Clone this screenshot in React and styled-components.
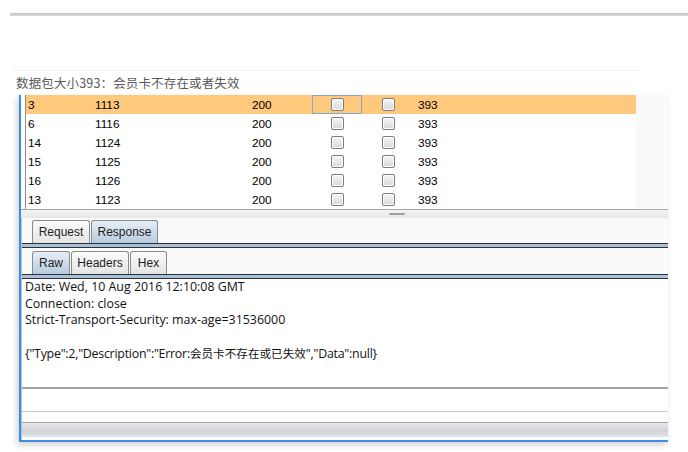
import React from 'react';
import styled, { createGlobalStyle } from 'styled-components';

const GlobalStyle = createGlobalStyle`
  html, body {
    margin: 0;
    padding: 0;
    background: #ffffff;
  }
  body {
    width: 688px;
    height: 452px;
    overflow: hidden;
    font-family: "Liberation Sans", Arial, sans-serif;
  }
`;

const Page = styled.div`
  display: flex;
  flex-direction: column;
  padding-top: 13px;
  height: 452px;
  box-sizing: border-box;
`;

const TopRule = styled.div`
  margin-left: 10px;
  height: 3px;
  background: linear-gradient(#c4c4c4, #dcdcdc);
`;

const BlankBox = styled.div`
  margin-left: 12px;
  width: 628px;
  height: 55px;
  border-bottom: 1px solid #f3f3f3;
  box-sizing: border-box;
`;

const Caption = styled.div`
  height: 24px;
  display: flex;
  align-items: center;
  padding-left: 16px;
  padding-bottom: 1px;
  box-sizing: border-box;
  font-family: "Noto Sans CJK SC", "Noto Sans", sans-serif;
  font-size: 12.5px;
  letter-spacing: 0.15px;
  color: #5a5a5a;
`;

const Window = styled.div`
  margin-left: 19px;
  width: 649px;
  height: 347px;
  box-sizing: border-box;
  border-left: 2px solid #3a8ee2;
  border-bottom: 2px solid #3a8ee2;
  box-shadow: -2px 3px 6px rgba(0, 0, 0, 0.18);
  display: flex;
  flex-direction: column;
  background: #ffffff;
`;

const TableArea = styled.div`
  display: flex;
  height: 114px;
  padding-left: 4px;
`;

const Table = styled.div`
  width: 611px;
  border-left: 1px solid #8e8e8e;
  display: flex;
  flex-direction: column;
`;

const SideStrip = styled.div`
  width: 32px;
  background: #fafafa;
`;

const Row = styled.div`
  display: grid;
  grid-template-columns: 67px 157px 62px 50px 52px 1fr;
  height: 19px;
  align-items: center;
  background: ${p => (p.$selected ? '#fec97c' : '#ffffff')};
`;

const Cell = styled.div`
  height: 100%;
  display: flex;
  align-items: center;
  padding-left: ${p => p.$pad ?? 1}px;
  font-size: 11.8px;
  color: #000;
  box-sizing: border-box;
  justify-content: ${p => (p.$center ? 'center' : 'flex-start')};
  border: 1px solid ${p => (p.$focus ? '#86a9cb' : 'transparent')};
`;

const Check = styled.span`
  width: 11px;
  height: 11px;
  border: 1px solid #7c7c7c;
  border-radius: 2px;
  background: linear-gradient(#f6f6f6, #d6d8dc);
  box-shadow: inset 0 0 0 1px #ffffff;
`;

const Splitter = styled.div`
  height: 9px;
  border-top: 1px solid #a6a6a6;
  background: linear-gradient(#f4f4f4, #e6e6e6);
  box-sizing: border-box;
  display: flex;
  justify-content: center;
  padding-left: 104px;
  padding-top: 3px;
`;

const Grip = styled.div`
  width: 16px;
  height: 2px;
  background: #a0a0a0;
  border-radius: 1px;
`;

const Panel = styled.div`
  border-left: 1px solid #b9c6d2;
  display: flex;
  flex-direction: column;
  flex: 1;
`;

const TabRow = styled.div`
  display: flex;
  align-items: flex-end;
  height: ${p => p.$h}px;
  padding-left: 10px;
  background: #fafafa;
`;

const Tab = styled.div`
  height: 23px;
  width: ${p => p.$w}px;
  box-sizing: border-box;
  margin-right: 1px;
  border: 1px solid #8a8a8a;
  border-bottom: none;
  border-radius: 3px 3px 0 0;
  display: flex;
  align-items: center;
  justify-content: center;
  font-size: 12px;
  color: #1e1e1e;
  background: ${p =>
    p.$active
      ? 'linear-gradient(#e6eef6, #b7cbde)'
      : 'linear-gradient(#fbfbfb, #e4e4e4)'};
`;

const Band = styled.div`
  height: 5px;
  box-sizing: border-box;
  border-top: 1px solid #2c2e3a;
  border-bottom: 1px solid #2c2e3a;
  background: #a9c1d7;
`;

const Body = styled.div`
  height: 108px;
  padding: 0 0 0 3px;
  box-sizing: border-box;
  font-family: "Open Sans", "Noto Sans CJK SC", sans-serif;
  font-size: 12.4px;
  line-height: 16.6px;
  color: #111;
  white-space: pre;
`;

const Line = styled.div`
  height: 16.6px;
  letter-spacing: ${p => p.$tight ? '-0.25px' : '0'};
`;

const Cjk = styled.span`
  font-family: "Noto Sans CJK SC", sans-serif;
  font-size: 11.6px;
  letter-spacing: 0;
`;

const Footer = styled.div`
  display: flex;
  flex-direction: column;
`;

const Rule = styled.div`
  height: ${p => p.$h}px;
  background: ${p => p.$c};
`;

const Gap = styled.div`
  height: ${p => p.$h}px;
  background: ${p => p.$c || '#ffffff'};
`;

const rows = [
  ['3', '1113', true],
  ['6', '1116'],
  ['14', '1124'],
  ['15', '1125'],
  ['16', '1126'],
  ['13', '1123'],
];

export default function App() {
  return (
    <>
      <GlobalStyle />
      <Page>
        <TopRule />
        <BlankBox />
        <Caption>数据包大小393：会员卡不存在或者失效</Caption>
        <Window>
          <TableArea>
            <Table>
              {rows.map(([id, num, sel]) => (
                <Row key={id} $selected={sel}>
                  <Cell>{id}</Cell>
                  <Cell>{num}</Cell>
                  <Cell>200</Cell>
                  <Cell $center $pad={0} $focus={sel}>
                    <Check />
                  </Cell>
                  <Cell $center $pad={0}>
                    <Check />
                  </Cell>
                  <Cell $pad={3}>393</Cell>
                </Row>
              ))}
            </Table>
            <SideStrip />
          </TableArea>
          <Splitter>
            <Grip />
          </Splitter>
          <Panel>
            <TabRow $h={25}>
              <Tab $w={58}>Request</Tab>
              <Tab $w={67} $active>Response</Tab>
            </TabRow>
            <Band />
            <TabRow $h={26}>
              <Tab $w={38} $active>Raw</Tab>
              <Tab $w={58}>Headers</Tab>
              <Tab $w={37}>Hex</Tab>
            </TabRow>
            <Band />
            <Body>
              <Line>Date: Wed, 10 Aug 2016 12:10:08 GMT</Line>
              <Line>Connection: close</Line>
              <Line>Strict-Transport-Security: max-age=31536000</Line>
              <Line />
              <Line $tight>
                {'{"Type":2,"Description":"Error:'}
                <Cjk>会员卡不存在或已失效</Cjk>
                {'","Data":null}'}
              </Line>
            </Body>
            <Footer>
              <Rule $h={2} $c="#a4a4a4" />
              <Gap $h={22} />
              <Rule $h={1} $c="#c8c8c8" />
              <Gap $h={10} $c="#fcfcfc" />
              <Rule $h={1} $c="#a2a2a2" />
              <Gap $h={14} $c="linear-gradient(#e6e7ea, #d2d4d8 60%, #e4e5e8)" />
              <Gap $h={2} />
            </Footer>
          </Panel>
        </Window>
      </Page>
    </>
  );
}
